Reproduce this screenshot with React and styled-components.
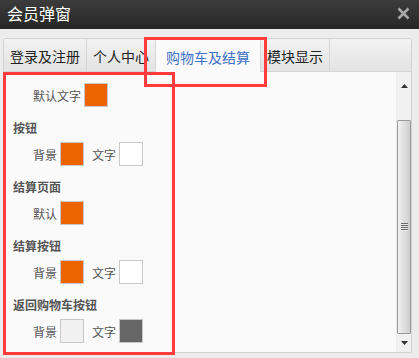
import styled, { createGlobalStyle } from 'styled-components';

const GlobalStyle = createGlobalStyle`
    html, body {
        margin: 0;
        padding: 0;
        background: #ececec;
    }
    * {
        box-sizing: border-box;
    }
`

const font = `"Noto Sans CJK SC", "Noto Sans", "Liberation Sans", sans-serif`;

const Window = styled.div`
    position: relative;
    width: 419px;
    height: 358px;
    overflow: hidden;
    background: #ececec;
    font-family: ${font};
`

const TitleBar = styled.div`
    height: 29px;
    display: flex;
    align-items: center;
    justify-content: space-between;
    padding: 0 9px 3px 7px;
    background: linear-gradient(#3c3c3c, #262626);
`

const Title = styled.span`
    color: #fff;
    font-size: 16px;
    line-height: 18px;
`

const Body = styled.div`
    padding: 9px 7px 0 3px;
`

const Panel = styled.div`
    height: 315px;
    display: flex;
    flex-direction: column;
    border: 1px solid #d2d2d2;
    border-radius: 3px 3px 0 0;
    background: #fafafa;
    overflow: hidden;
`

const TabStrip = styled.div`
    height: 33px;
    flex: none;
    display: flex;
    border-bottom: 1px solid #d6d6d6;
    background: linear-gradient(#f2f2f2, #e3e3e3);
`

const Tab = styled.div`
    display: flex;
    align-items: center;
    padding: 2px ${(p) => (p.$active ? '10px' : '6px')} 0;
    margin-bottom: ${(p) => (p.$active ? '-1px' : '0')};
    border-right: 1px solid #d6d6d6;
    background: ${(p) => (p.$active ? '#fafafa' : 'transparent')};
    color: ${(p) => (p.$active ? '#3f72c6' : '#222')};
    font-size: 14px;
    white-space: nowrap;
`

const ContentArea = styled.div`
    flex: 1;
    display: flex;
    min-height: 0;
`

const Content = styled.div`
    flex: 1;
    padding: 11px 0 0 9px;
    overflow: hidden;
`

const Section = styled.div`
    margin-top: 13px;
`

const Heading = styled.div`
    font-size: 12px;
    line-height: 16px;
    font-weight: bold;
    color: #555;
    margin-bottom: 6px;
`

const Row = styled.div`
    display: flex;
    align-items: center;
    height: 24px;
    padding-left: 20px;
`

const Label = styled.span`
    font-size: 12px;
    color: #555;
    margin-right: 3px;
    &:not(:first-child) {
        margin-left: 8px;
    }
`

const Swatch = styled.div`
    width: 24px;
    height: 24px;
    border: 1px solid #c8c8c8;
    background: ${(p) => p.$color};
`

const ScrollBar = styled.div`
    width: 15px;
    flex: none;
    display: flex;
    flex-direction: column;
    background: #f1f1f1;
    border-left: 1px solid #ececec;
`

const ArrowButton = styled.div`
    height: ${(p) => p.$h}px;
    flex: none;
    display: flex;
    align-items: center;
    justify-content: center;
`

const TrackGap = styled.div`
    height: 20px;
    flex: none;
`

const Thumb = styled.div`
    height: 214px;
    width: 14px;
    flex: none;
    display: flex;
    align-items: center;
    justify-content: center;
    border: 1px solid #9a9a9a;
    border-radius: 1px;
    background: linear-gradient(to right, #f2f2f2, #e2e2e2 40%, #cfcfcf);
`

const Grip = styled.div`
    width: 7px;
    height: 8px;
    background: repeating-linear-gradient(#6a6a6a 0 1px, #e8e8e8 1px 2px);
`

const Annotation = styled.div`
    position: absolute;
    left: ${(p) => p.$x}px;
    top: ${(p) => p.$y}px;
    width: ${(p) => p.$w}px;
    height: ${(p) => p.$h}px;
    border: 3px solid #ff3b3b;
    pointer-events: none;
`

const Arrow = ({ up }) => (
    <svg width="7" height="4" viewBox="0 0 7 4">
        <polygon points={up ? '0,4 7,4 3.5,0' : '0,0 7,0 3.5,4'} fill="#333" />
    </svg>
);

const CloseIcon = () => (
    <svg width="13" height="13" viewBox="0 0 13 13">
        <path d="M1.5 1.5 L11.5 11.5 M11.5 1.5 L1.5 11.5" stroke="#a9a9a9" strokeWidth="2.6" />
    </svg>
);

const tabs = ['登录及注册', '个人中心', '购物车及结算', '模块显示'];

const sections = [
    { title: '按钮', items: [['背景', '#ec6300'], ['文字', '#ffffff']] },
    { title: '结算页面', items: [['默认', '#ec6300']] },
    { title: '结算按钮', items: [['背景', '#ec6300'], ['文字', '#ffffff']] },
    { title: '返回购物车按钮', items: [['背景', '#f1f1f1'], ['文字', '#666666']] },
];

function ColorRow({ items }) {
    return (
        <Row>
            {items.map(([label, color]) => [
                <Label key={label + 'l'}>{label}</Label>,
                <Swatch key={label + 's'} $color={color} />,
            ])}
        </Row>
    );
}

export default function App() {
    return (
        <Window>
            <GlobalStyle />
            <TitleBar>
                <Title>会员弹窗</Title>
                <CloseIcon />
            </TitleBar>
            <Body>
                <Panel>
                    <TabStrip>
                        {tabs.map((t, i) => (
                            <Tab key={t} $active={i === 2}>{t}</Tab>
                        ))}
                    </TabStrip>
                    <ContentArea>
                        <Content>
                            <ColorRow items={[['默认文字', '#ec6300']]} />
                            {sections.map((s) => (
                                <Section key={s.title}>
                                    <Heading>{s.title}</Heading>
                                    <ColorRow items={s.items} />
                                </Section>
                            ))}
                        </Content>
                        <ScrollBar>
                            <ArrowButton $h={28}><Arrow up /></ArrowButton>
                            <TrackGap />
                            <Thumb><Grip /></Thumb>
                            <ArrowButton $h={18}><Arrow /></ArrowButton>
                        </ScrollBar>
                    </ContentArea>
                </Panel>
            </Body>
            <Annotation $x={144} $y={37} $w={123} $h={50} />
            <Annotation $x={3} $y={72} $w={172} $h={283} />
        </Window>
    );
}
